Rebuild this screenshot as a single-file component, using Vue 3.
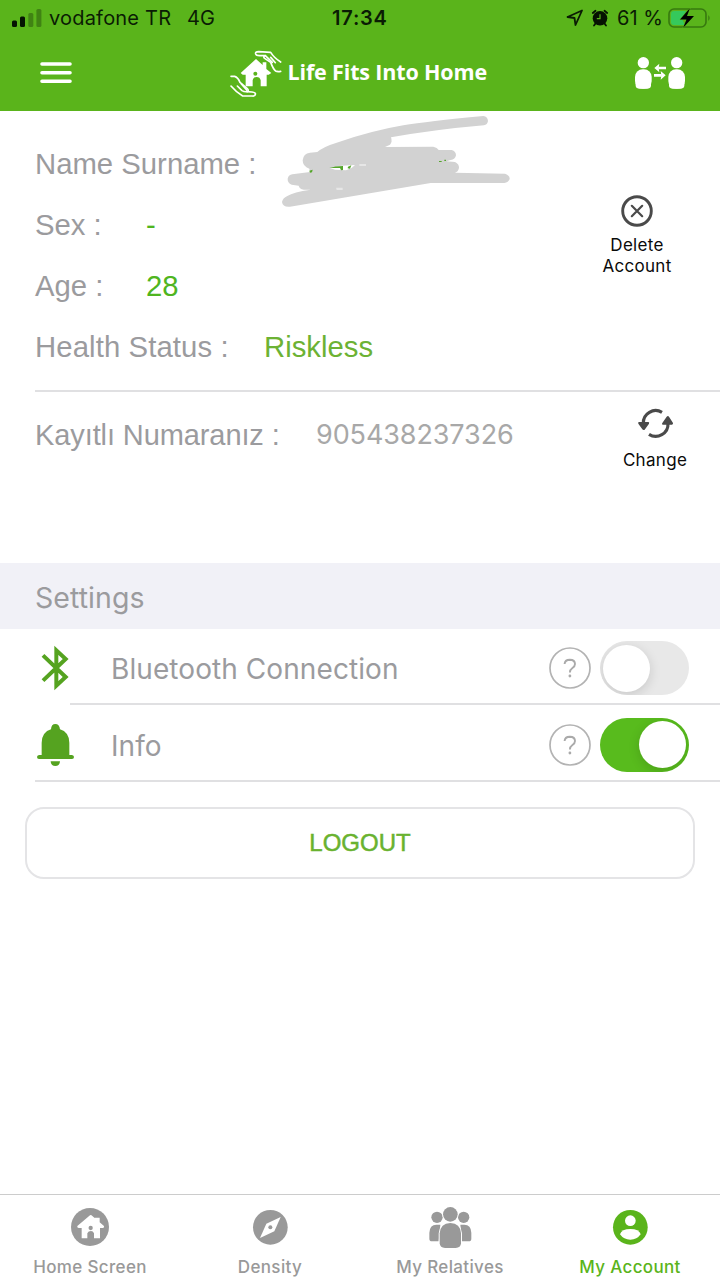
<script setup>
const settings = [
  { key: 'bluetooth', label: 'Bluetooth Connection', on: false },
  { key: 'info', label: 'Info', on: true },
]
</script>

<template>
  <div class="screen">
    <header class="top">
      <div class="status">
        <svg class="signal" viewBox="0 0 30 18" width="30" height="18">
          <rect x="0" y="11.5" width="5" height="6.5" rx="1.5" />
          <rect x="8" y="7.5" width="5" height="10.5" rx="1.5" />
          <rect x="16.300" y="4" width="5" height="14" rx="1.5" opacity=".3" />
          <rect x="24.400" y="0" width="5" height="18" rx="1.5" opacity=".3" />
        </svg>
        <span class="carrier">vodafone TR</span>
        <span class="network">4G</span>
        <span class="time">17:34</span>
        <svg class="arrow" viewBox="0 0 18 18" width="18" height="18">
          <path d="M1.500 8 L16 1.500 L9.500 16 L8.500 9Z" fill="none" stroke="#0a1c04" stroke-width="1.800" stroke-linejoin="round" />
        </svg>
        <svg class="alarm" viewBox="0 0 18 18" width="18" height="18">
          <path d="M1.800 4 L4.500 1.800 M16.200 4 L13.500 1.800 M4.500 14.500 L3 16.500 M13.500 14.500 L15 16.500" stroke="#061202" stroke-width="1.800" stroke-linecap="round" />
          <circle cx="9" cy="9.300" r="7.300" fill="#061202" />
          <path d="M9 5.300 V9.700 H5.800" fill="none" stroke="#5ab41b" stroke-width="1.200" />
        </svg>
        <span class="percent">61 %</span>
        <svg class="battery" viewBox="0 0 43 22" width="43" height="22">
          <rect x="1" y="2" width="37" height="18" rx="5" fill="none" stroke="#37790f" stroke-width="1.600" />
          <path d="M40.300 8 Q43 11 40.300 14Z" fill="#37790f" />
          <path d="M6 4 H18 L14 12 L17 18 H6 Q3 18 3 15 V7 Q3 4 6 4Z" fill="#35c95b" />
          <path d="M22 1 L12 12.500 H18.500 L15 21 L26 9 H19Z" fill="#000" stroke="#5ab41b" stroke-width="1" paint-order="stroke" />
        </svg>
      </div>
      <div class="nav">
        <svg class="menu" viewBox="0 0 32 22" width="32" height="22">
          <path d="M2 2 H30 M2 10.700 H30 M2 19.300 H30" stroke="#fff" stroke-width="3.600" stroke-linecap="round" />
        </svg>
        <div class="brand">
          <svg viewBox="0 0 156 140" width="52" height="46.700">
            <path d="M32 66 L78 24 L98 42 V34 H109 V54 L124 66 L116 71 H110 V106 H92 V88 Q90 78 80 78 Q70 78 68 88 V106 H47 V71 H38Z" fill="#fff" />
            <circle cx="76" cy="68" r="6" fill="#5ab41b" />
            <g fill="none" stroke="#fff" stroke-width="5" stroke-linecap="round" stroke-linejoin="round">
              <path d="M152 33 Q132 20 122 4 L86 2 Q75 2 77 9 Q79 14 88 14 H106 Q98 17 104 22 L122 34 Q130 55 137 60 Q142 63 152 61" />
              <path d="M106 14 L127 34 M122 19 L136 35" />
              <path d="M3 76 H14 Q24 79 30 94 L52 113 Q58 119 51 122 L66 123 Q78 125 76 130 Q75 136 67 135 H38 Q20 125 3 105" />
              <path d="M22 105 L36 119 Q42 123 52 122 M34 99 L50 117" />
            </g>
          </svg>
          <span class="title">Life Fits Into Home</span>
        </div>
        <svg class="transfer" viewBox="0 0 150 96" width="50" height="32">
          <g fill="#fff">
            <circle cx="25" cy="17" r="17" /><rect x="0" y="37" width="50" height="58" rx="23" /><rect x="2" y="70" width="46" height="25" rx="10" />
            <circle cx="125" cy="17" r="17" /><rect x="100" y="37" width="50" height="58" rx="23" /><rect x="102" y="70" width="46" height="25" rx="10" />
          </g>
          <path d="M93 33 H70 M57 55 H80" stroke="#fff" stroke-width="8" />
          <path d="M58 33 L73 20 L71 33 L73 46Z M92 55 L77 42 L79 55 L77 68Z" fill="#fff" />
        </svg>
      </div>
    </header>

    <section class="profile">
      <dl class="fields">
        <div class="field name">
          <dt>Name Surname :</dt>
          <dd>
            <svg class="scribble" viewBox="48 0 720 300" width="240" height="100">
              <path fill="#d2d2d2" d="M670 12 Q683 14 684 27 Q682 38 672 40 Q530 52 393 76 Q398 90 390 98 L375 105 L520 104 Q532 106 536 114 L575 114 Q588 118 588 130 Q586 142 572 144 L560 148 L585 150 Q598 156 597 168 Q594 180 585 182 L735 185 Q750 190 749 201 Q745 212 733 213 L512 213 L90 284 Q68 286 66 270 Q68 258 82 252 Q100 240 152 233 Q118 236 116 221 L95 218 Q82 212 83 200 Q86 188 97 187 L150 180 L148 170 Q128 164 128 145 Q130 124 150 122 L172 120 Q190 104 230 92 Q340 55 430 40 Q500 28 670 12Z" />
              <path fill="#fff" d="M210 168 L245 161 L285 159 L275 168 L258 175 L225 173Z" />
              <path fill="#e6e6e6" d="M228 227 H248 V234 H230Z M298 156 H318 V162 H298Z" />
              <path fill="#55a62b" d="M148 176 L158 173 L156 181 L150 182Z M208 168 Q225 162 249 162 L249 174 L243 175 L240 168Z M264 164 L274 160 L270 170 L263 169Z M537 147 h8 v3 h-8Z M553 143 h5 v4 h-5Z" />
            </svg>
          </dd>
        </div>
        <div class="field sex"><dt>Sex :</dt><dd>-</dd></div>
        <div class="field age"><dt>Age :</dt><dd>28</dd></div>
        <div class="field health"><dt>Health Status :</dt><dd>Riskless</dd></div>
      </dl>
      <button class="action delete">
        <svg viewBox="0 0 32 32" width="32" height="32" fill="none" stroke="#4a4a4a">
          <circle cx="16" cy="16" r="14.300" stroke-width="2.900" />
          <path d="M10.800 10.800 L21.200 21.200 M21.200 10.800 L10.800 21.200" stroke-width="2.200" stroke-linecap="round" />
        </svg>
        <span>Delete<br>Account</span>
      </button>
    </section>

    <section class="phone">
      <span class="phone-label">Kayıtlı Numaranız :</span>
      <span class="phone-number">905438237326</span>
      <button class="action change">
        <svg viewBox="0 0 105 86" width="35" height="28.700">
          <g fill="none" stroke="#4a4a4a" stroke-width="9.500">
            <path d="M16 43 A37 37 0 0 1 72 10" />
            <path d="M90 43 A37 37 0 0 1 33 76" />
          </g>
          <path d="M3 39 H31 Q35 40 33 44 L20 62 Q16 65 13 61 L1 44 Q-1 40 3 39Z M74 47 Q70 46 73 42 L86 23 Q90 19 93 23 L105 42 Q106 46 102 47Z" fill="#4a4a4a" />
        </svg>
        <span>Change</span>
      </button>
    </section>

    <h2 class="heading"><span>Settings</span></h2>

    <ul class="settings">
      <li v-for="item in settings" :key="item.key" :class="['setting', item.key]">
        <span class="glyph">
          <svg v-if="item.key === 'bluetooth'" viewBox="0 0 84 126" width="28" height="42">
            <path d="M6 25 L74 90 L46 116 V10 L74 36 L6 101" fill="none" stroke="#55a320" stroke-width="12" />
          </svg>
          <svg v-else viewBox="0 0 111 126" width="37" height="42">
            <path d="M14 93 V56 Q15 24 42 16 Q43 0 55 0 Q67 0 69 16 Q96 24 97 56 V93 H105 Q111 94 111 99 Q111 105 105 105 H6 Q0 105 0 99 Q0 94 6 93Z M41 112 H69 Q68 126 55 126 Q42 126 41 112Z" fill="#55a320" />
          </svg>
        </span>
        <span class="label">{{ item.label }}</span>
        <svg class="help" viewBox="0 0 42 42" width="42" height="42">
          <circle cx="21" cy="21" r="20" fill="none" stroke="#b3b3b3" stroke-width="1.700" />
          <path d="M15.600 17 Q15.800 12.800 20.800 12.700 Q26 12.800 26 17 Q26 19.500 23.200 21.300 Q20.900 22.800 20.900 25.500" fill="none" stroke="#aaa" stroke-width="1.900" />
          <circle cx="20.900" cy="29" r="1.400" fill="#aaa" />
        </svg>
        <span :class="['toggle', { on: item.on }]"><i></i></span>
      </li>
    </ul>

    <button class="logout">LOGOUT</button>

    <nav class="tabs">
      <div class="tab home">
        <svg viewBox="0 0 114 114" width="38" height="38">
          <circle cx="57" cy="57" r="57" fill="#999" />
          <path d="M19 54 L57 22 Q60 20 64 24 L71 30 V29 H86 V43 L99 54 Q101 58 96 60 H87 V91 H69 V76 Q66 69 60 69 Q52 69 49 76 V91 H32 V60 H23 Q17 58 19 54Z" fill="#fff" />
          <circle cx="59" cy="60" r="6.500" fill="#999" />
        </svg>
        <span>Home Screen</span>
      </div>
      <div class="tab density">
        <svg viewBox="0 0 104 104" width="34.700" height="34.700">
          <circle cx="52" cy="52" r="52" fill="#999" />
          <path d="M83 21 L64 64 L21 84 L40 41Z" fill="#fff" />
          <circle cx="52" cy="52" r="6" fill="#999" />
        </svg>
        <span>Density</span>
      </div>
      <div class="tab relatives">
        <svg viewBox="0 0 128 124" width="42.700" height="41.300" fill="#999">
          <circle cx="24" cy="31" r="17" /><circle cx="104" cy="31" r="17" />
          <path d="M1 95 V77 Q2 53 22 53 H34 L29 103 H9 Q1 103 1 95Z M127 95 V77 Q126 53 106 53 H94 L99 103 H119 Q127 103 127 95Z" />
          <circle cx="64" cy="22" r="24.500" fill="#fff" /><circle cx="64" cy="22" r="22" />
          <path d="M32 109 V79 Q34 49 64 48 Q94 49 96 79 V109 Q95 123 80 123 H48 Q33 123 32 109Z" stroke="#fff" stroke-width="6" paint-order="stroke" />
        </svg>
        <span>My Relatives</span>
      </div>
      <div class="tab account active">
        <svg viewBox="0 0 104 104" width="34.700" height="34.700">
          <circle cx="52" cy="52" r="52" fill="#5ab41b" />
          <circle cx="52" cy="32" r="16" fill="#fff" />
          <path d="M21 73 Q26 57 52 57 Q78 57 83 73 Q72 89 52 89 Q32 89 21 73Z" fill="#fff" />
        </svg>
        <span>My Account</span>
      </div>
    </nav>
  </div>
</template>

<style>
body { background: #fff; }
</style>

<style scoped>
* { box-sizing: border-box; }
.screen {
  width: 720px; height: 1280px; overflow: hidden; background: #fff;
  display: flex; flex-direction: column;
  font-family: Inter, "Liberation Sans", sans-serif; color: #9b9b9e;
}
button { border: 0; background: none; font: inherit; padding: 0; }
svg { display: block; flex: none; overflow: visible; }
span { white-space: nowrap; }
.top { height: 111px; flex: none; background: #5ab41b; color: #0a1c04; }
.status { height: 36px; display: flex; align-items: center; padding-left: 12px; font-size: 20px; line-height: 24px; }
.signal { fill: #051402; }
.carrier { width: 138px; margin-left: 7px; letter-spacing: 0.2px; }
.network { width: 145px; letter-spacing: 0.2px; }
.time { width: 234px; font-weight: 600; letter-spacing: 0.8px; }
.alarm { margin-left: 7px; }
.percent { width: 51px; margin-left: 8px; }
.nav { height: 75px; display: flex; align-items: center; padding: 0 35px 0 40px; justify-content: space-between; }
.menu { margin-bottom: 1px; }
.brand { display: flex; align-items: center; gap: 6px; flex: none; width: 260px; margin-left: 12px; margin-top: 1px; }
.title { color: #fff; font: 700 21.500px/28px "Open Sans", sans-serif; letter-spacing: -0.15px; margin-bottom: 5px; }
.transfer { margin-bottom: 2px; }

.profile { height: 279px; flex: none; padding: 22px 0 0 35px; display: flex; justify-content: space-between; font: 29.300px/34px "Liberation Sans", sans-serif; }
.fields { margin: 0; }
.field { height: 61px; display: flex; align-items: center; }
dd { margin: 0; color: #5ab41b; }
.name { position: relative; }
.scribble { position: absolute; left: 241px; top: -21px; }
.sex dd, .age dd { color: #4fb520; }
.sex dt, .age dt { width: 111px; }
.health dt { width: 229px; letter-spacing: 0.1px; }
.health dd { color: #6cb234; }
.action { display: flex; flex-direction: column; align-items: center; color: #0a0a0a; font: 17px/20.500px Inter, sans-serif; letter-spacing: 0.3px; }
.delete { width: 120px; height: 84px; margin: 62px 23px 0 0; gap: 8px; }
.phone { height: 173px; flex: none; margin-left: 35px; border-top: 2px solid #e0e0e2; display: flex; align-items: flex-start; padding-top: 26px; line-height: 34px; }
.phone-label { font: 29px/34px "Liberation Sans", sans-serif; width: 281px; letter-spacing: -0.1px; }
.phone-number { font-size: 27px; font-weight: 400; color: #a8a8a8; letter-spacing: -0.1px; }
.change { width: 90px; margin: -9px 20px 0 auto; gap: 12px; }
.heading { height: 66px; flex: none; margin: 0; padding-left: 35px; background: #f1f1f7; display: flex; align-items: center; font-size: 28.500px; font-weight: 400; letter-spacing: 0.05px; }
.heading span { margin-top: 2px; }
.settings { list-style: none; margin: 0; padding: 0; }
.setting { position: relative; height: 76px; display: flex; align-items: center; padding: 2px 31px 0 35px; }
.setting:last-child { height: 77px; }
.setting::after { content: ""; position: absolute; bottom: 0; right: 0; left: 35px; height: 2px; background: #e0e0e2; }
.bluetooth::after { left: 70px; }
.glyph { width: 76px; padding-left: 2px; }
.bluetooth .glyph { padding-left: 6px; }
.label { font-size: 28px; font-weight: 400; letter-spacing: 0.08px; margin-top: 2px; }
.help { margin-left: auto; margin-right: 9px; }
.toggle { width: 89px; height: 54px; border-radius: 27px; background: #e8e8e8; display: flex; align-items: center; padding: 0 3px; overflow: hidden; }
.toggle i { width: 47px; height: 47px; border-radius: 50%; background: #fff; box-shadow: 0 3px 12px rgba(0, 0, 0, .14); }
.toggle.on { background: #58bb1d; justify-content: flex-end; }
.logout { margin: 25px 25px 0; height: 72px; flex: none; border: 2px solid #e4e4e6; border-radius: 19px; color: #69b22f; font: 24px/28px "Liberation Sans", sans-serif; -webkit-text-stroke: 0.500px #69b22f; }
.tabs { height: 86px; flex: none; margin-top: auto; border-top: 1px solid #ccc; display: grid; grid-template-columns: repeat(4, 1fr); }
.tab { display: flex; flex-direction: column; align-items: center; justify-content: space-between; padding: 13px 0 3px; color: #999; font-size: 17px; font-weight: 500; line-height: 20px; letter-spacing: 0.35px; }
.density, .account { padding-top: 15px; }
.relatives { padding-top: 12px; }
.active { color: #5ab41b; }
</style>
